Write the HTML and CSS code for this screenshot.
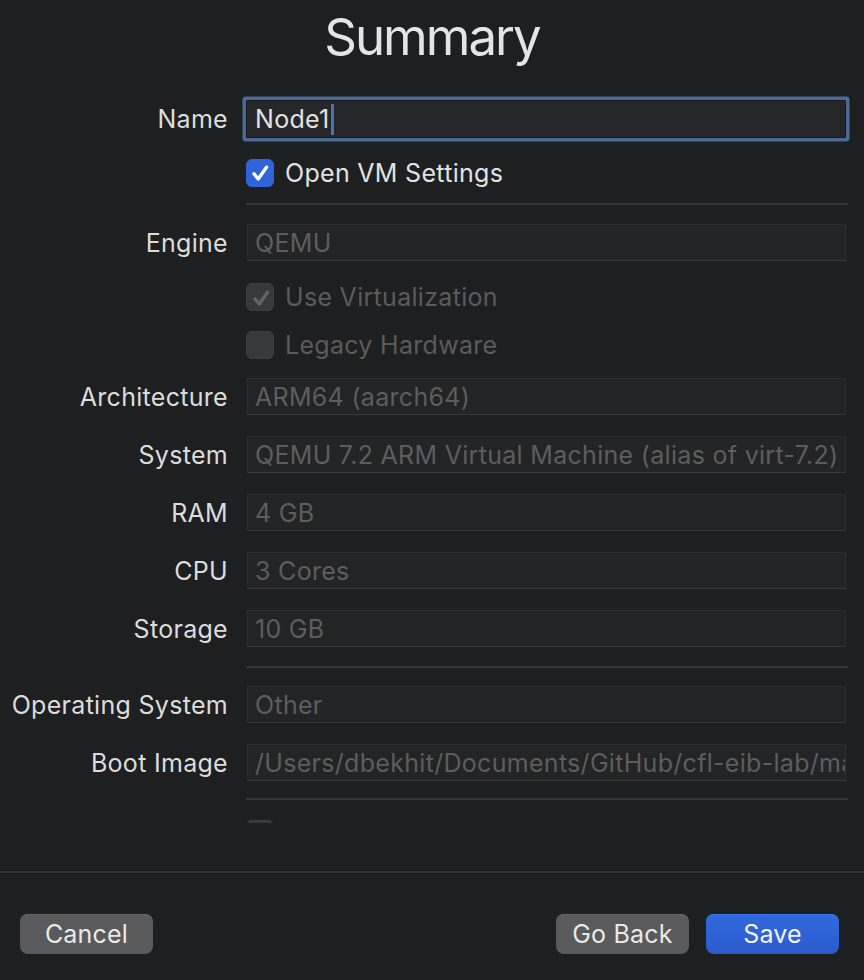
FILE: index.html
```html
<!DOCTYPE html>
<html>
<head>
<meta charset="utf-8">
<link rel="stylesheet" href="styles.css">
</head>
<body>
<div class="window">
  <div class="scroll">
    <h1 class="title">Summary</h1>
    <div class="form">
      <div class="row r-name">
        <div class="label">Name</div>
        <div class="field field-edit"><span class="val">Node1</span><span class="caret"></span></div>
      </div>
      <div class="row r-check1">
        <div class="label"></div>
        <div class="check">
          <span class="box box-on"><svg viewBox="0 0 28 28" width="28" height="28"><path d="M8 14.8 L12.2 20 L20.5 8.2" fill="none" stroke="#ffffff" stroke-width="3.4" stroke-linecap="round" stroke-linejoin="round"/></svg></span>
          <span class="ctext">Open VM Settings</span>
        </div>
      </div>
      <div class="row r-sep1"><div class="label"></div><div class="sep"></div></div>
      <div class="row r-engine">
        <div class="label">Engine</div>
        <div class="field field-off"><span class="val">QEMU</span></div>
      </div>
      <div class="row r-virt">
        <div class="label"></div>
        <div class="check check-off">
          <span class="box box-dis"><svg viewBox="0 0 28 28" width="28" height="28"><path d="M8 14.8 L12.2 20 L20.5 8.2" fill="none" stroke="#646466" stroke-width="3.4" stroke-linecap="round" stroke-linejoin="round"/></svg></span>
          <span class="ctext">Use Virtualization</span>
        </div>
      </div>
      <div class="row r-legacy">
        <div class="label"></div>
        <div class="check check-off">
          <span class="box box-dis"></span>
          <span class="ctext">Legacy Hardware</span>
        </div>
      </div>
      <div class="row r-arch">
        <div class="label">Architecture</div>
        <div class="field field-off"><span class="val">ARM64 (aarch64)</span></div>
      </div>
      <div class="row r-std">
        <div class="label">System</div>
        <div class="field field-off"><span class="val">QEMU 7.2 ARM Virtual Machine (alias of virt-7.2)</span></div>
      </div>
      <div class="row r-std">
        <div class="label">RAM</div>
        <div class="field field-off"><span class="val">4 GB</span></div>
      </div>
      <div class="row r-std">
        <div class="label">CPU</div>
        <div class="field field-off"><span class="val">3 Cores</span></div>
      </div>
      <div class="row r-std">
        <div class="label">Storage</div>
        <div class="field field-off"><span class="val">10 GB</span></div>
      </div>
      <div class="row r-sep2"><div class="label"></div><div class="sep"></div></div>
      <div class="row r-os">
        <div class="label">Operating System</div>
        <div class="field field-off"><span class="val">Other</span></div>
      </div>
      <div class="row r-std">
        <div class="label">Boot Image</div>
        <div class="field field-off"><span class="val">/Users/dbekhit/Documents/GitHub/cfl-eib-lab/ma</span></div>
      </div>
      <div class="row r-sep3"><div class="label"></div><div class="sep"></div></div>
      <div class="row r-last">
        <div class="label"></div>
        <div class="check check-off"><span class="box box-dis"></span></div>
      </div>
    </div>
  </div>
  <div class="footer">
    <button class="btn btn-grey">Cancel</button>
    <div class="spacer"></div>
    <button class="btn btn-grey">Go Back</button>
    <button class="btn btn-blue">Save</button>
  </div>
</div>
</body>
</html>
```

FILE: styles.css
```css
html, body {
  margin: 0;
  padding: 0;
  background: #1e1f21;
}
body {
  width: 864px;
  height: 980px;
  overflow: hidden;
  font-family: Inter, "Liberation Sans", Arial, sans-serif;
  color: #dedede;
}
.window {
  display: flex;
  flex-direction: column;
  height: 980px;
}
.scroll {
  height: 823px;
  overflow: hidden;
  flex: none;
}
.title {
  margin: 0;
  height: 74px;
  line-height: 73px;
  font-size: 51px;
  font-weight: 400;
  text-align: center;
  color: #e4e4e4;
  letter-spacing: -2px;
}
.form {
  display: flex;
  flex-direction: column;
}
.row {
  display: flex;
  align-items: center;
  flex: none;
}
.label {
  width: 228px;
  flex: none;
  text-align: right;
  font-size: 25px;
  letter-spacing: 0.3px;
  color: #dcdcdc;
  white-space: nowrap;
}
.field {
  box-sizing: border-box;
  height: 37px;
  width: 599px;
  margin-left: 19px;
  display: flex;
  align-items: center;
  padding-left: 7px;
  overflow: hidden;
  white-space: nowrap;
  font-size: 25px;
  letter-spacing: 0.3px;
}
.field-off {
  background: #232426;
  border: 1px solid #2c2d2f;
  border-bottom-color: #37383a;
  color: #5c5d5f;
}
.field-edit {
  height: 38px;
  width: 600px;
  margin-left: 18px;
  background: #262729;
  border: 1px solid #17181a;
  color: #e2e2e2;
  padding-left: 8px;
  box-shadow: 0 0 0 3.5px #4a6a94;
  border-radius: 1px;
}
.caret {
  display: inline-block;
  width: 3px;
  height: 31px;
  background: #4d72b3;
  margin-left: 1px;
}
.check {
  display: flex;
  align-items: center;
  margin-left: 18px;
  font-size: 25px;
  letter-spacing: 0.3px;
  color: #e2e2e2;
}
.check-off {
  color: #5a5b5d;
}
.box {
  box-sizing: border-box;
  width: 28px;
  height: 28px;
  border-radius: 6px;
  flex: none;
  display: block;
}
.box svg { display: block; }
.box-on {
  background: #3064d9;
}
.box-dis {
  background: #38393b;
  border: 1px solid #3e3f41;
}
.ctext {
  margin-left: 11px;
}
.sep {
  margin-left: 18px;
  width: 602px;
  height: 2px;
  background: #343537;
}
.r-name   { margin-top: 26px; height: 38px; }
.r-check1 { margin-top: 21px; height: 28px; }
.r-sep1   { margin-top: 16px; height: 2px; }
.r-engine { margin-top: 19px; height: 37px; }
.r-virt   { margin-top: 22px; height: 28px; }
.r-legacy { margin-top: 20px; height: 28px; }
.r-arch   { margin-top: 19px; height: 37px; }
.r-std    { margin-top: 21px; height: 37px; }
.r-sep2   { margin-top: 19px; height: 2px; }
.r-os     { margin-top: 18px; height: 37px; }
.r-sep3   { margin-top: 17px; height: 2px; }
.r-last   { margin-top: 20px; height: 28px; align-items: flex-start; }
.footer {
  margin-top: 48px;
  border-top: 2px solid #333436;
  padding: 41px 25px 0 20px;
  display: flex;
  align-items: flex-start;
}
.spacer { flex: 1; }
.btn {
  width: 133px;
  height: 40px;
  border: none;
  border-radius: 8px;
  font-family: Inter, "Liberation Sans", Arial, sans-serif;
  font-size: 25px;
  letter-spacing: 0.2px;
  color: #e9e9e9;
  padding: 0;
  line-height: 40px;
}
.btn-grey {
  background: #5a5a5c;
  box-shadow: inset 0 1px 0 #676769;
}
.btn-blue {
  margin-left: 17px;
  background: linear-gradient(#3269df, #2b5bcb);
  box-shadow: inset 0 1px 0 #3d74e6;
  color: #f2f2f7;
}
```
